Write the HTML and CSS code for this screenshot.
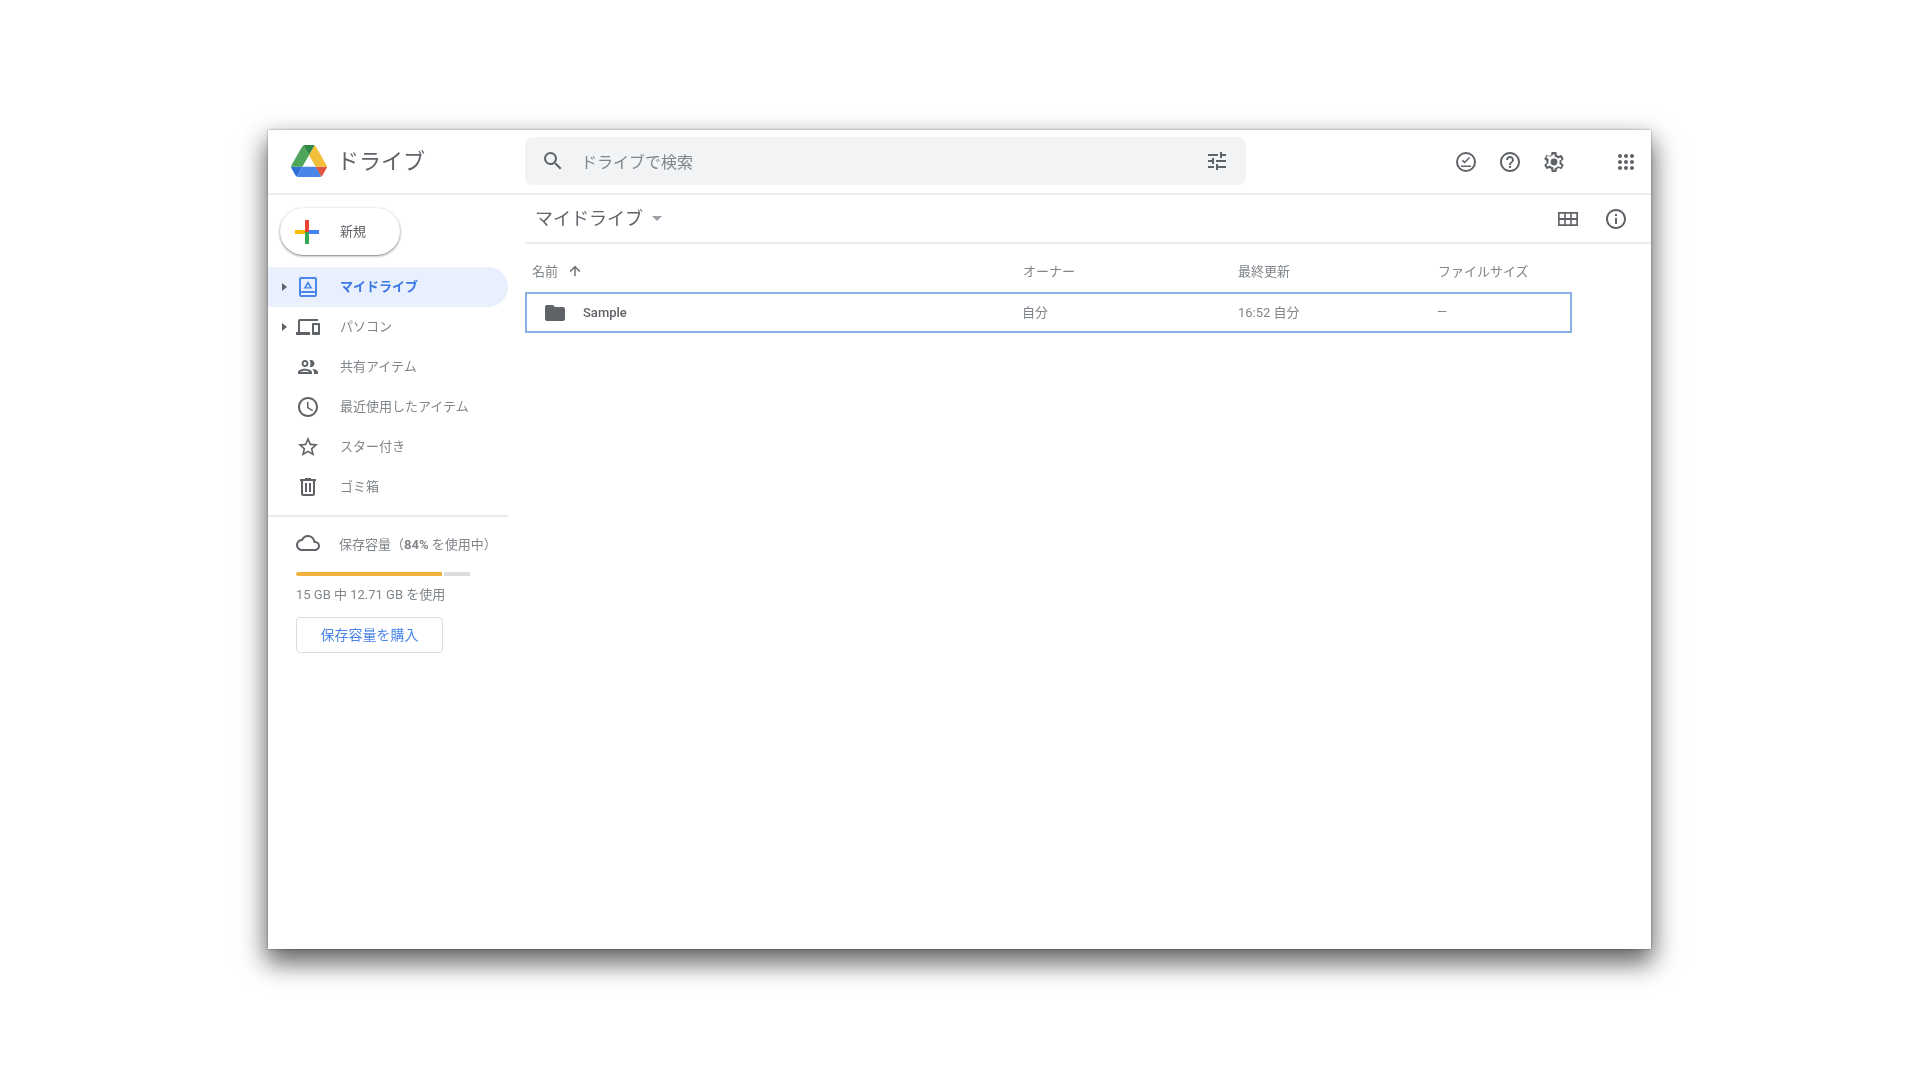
FILE: index.html
```html
<!DOCTYPE html>
<html lang="ja">
<head>
<meta charset="utf-8">
<title>ドライブ</title>
<link rel="stylesheet" href="styles.css">
</head>
<body>
<div class="window">
  <header class="topbar">
    <div class="brand">
      <svg class="logo" viewBox="0 0 87.3 78" width="36" height="32">
        <path d="M6.6 66.85l3.85 6.65c.8 1.4 1.95 2.5 3.3 3.3L27.5 53H0c0 1.55.4 3.1 1.2 4.5z" fill="#2f6fd6"/>
        <path d="M43.65 25L29.9 1.2c-1.35.8-2.5 1.9-3.3 3.3L1.2 48.5A9.06 9.06 0 0 0 0 53h27.5z" fill="#4fa65b"/>
        <path d="M73.55 76.8c1.35-.8 2.5-1.9 3.3-3.3l1.6-2.75 7.65-13.25c.8-1.4 1.2-2.95 1.2-4.5H59.8l5.85 11.5z" fill="#e2543e"/>
        <path d="M43.65 25L57.4 1.2C56.05.4 54.5 0 52.9 0H34.4c-1.6 0-3.15.45-4.5 1.2z" fill="#2f8a45"/>
        <path d="M59.8 53H27.5L13.75 76.8c1.35.8 2.9 1.2 4.5 1.2h50.8c1.6 0 3.15-.45 4.5-1.2z" fill="#4a86e8"/>
        <path d="M73.4 26.5L60.7 4.5c-.8-1.4-1.95-2.5-3.3-3.3L43.65 25 59.8 53h27.45c0-1.55-.4-3.1-1.2-4.5z" fill="#f4bf3a"/>
      </svg>
      <span class="brand-name">ドライブ</span>
    </div>
    <div class="search">
      <svg class="icon" viewBox="0 0 24 24"><path d="M15.5 14h-.79l-.28-.27A6.47 6.47 0 0 0 16 9.5 6.5 6.5 0 1 0 9.5 16c1.61 0 3.09-.59 4.23-1.57l.27.28v.79l5 4.99L20.49 19zm-6 0C7.01 14 5 11.99 5 9.5S7.01 5 9.5 5 14 7.01 14 9.500 11.990 14 9.500 14z"/></svg>
      <span class="search-text">ドライブで検索</span>
      <svg class="icon" viewBox="0 0 24 24"><path d="M3 17v2h6v-2H3zM3 5v2h10V5H3zm10 16v-2h8v-2h-8v-2h-2v6h2zM7 9v2H3v2h4v2h2V9H7zm14 4v-2H11v2h10zm-6-4h2V7h4V5h-4V3h-2v6z"/></svg>
    </div>
    <div class="top-actions">
      <svg class="icon" viewBox="0 0 24 24"><path fill-rule="evenodd" d="M12 2a10 10 0 1 0 0 20 10 10 0 0 0 0-20zm0 18a8 8 0 1 1 0-16 8 8 0 0 1 0 16z"/><path d="M7 15.500h10v1.600H7zM10.600 13.600l-2.700-2.700 1.100-1.100 1.600 1.600 4.400-4.400 1.100 1.100z"/></svg>
      <svg class="icon" viewBox="0 0 24 24"><path d="M11 18h2v-2h-2v2zm1-16C6.480 2 2 6.480 2 12s4.480 10 10 10 10-4.480 10-10S17.520 2 12 2zm0 18c-4.410 0-8-3.590-8-8s3.590-8 8-8 8 3.590 8 8-3.590 8-8 8zm0-14c-2.210 0-4 1.790-4 4h2c0-1.100.9-2 2-2s2 .9 2 2c0 2-3 1.750-3 5h2c0-2.250 3-2.500 3-5 0-2.210-1.790-4-4-4z"/></svg>
      <svg class="icon" viewBox="0 0 24 24"><path fill-rule="evenodd" d="M19.430 12.980c.04-.32.07-.64.07-.98s-.03-.66-.07-.98l2.110-1.650c.19-.15.24-.42.12-.64l-2-3.460c-.12-.22-.39-.3-.61-.22l-2.490 1c-.52-.4-1.080-.73-1.690-.98l-.38-2.650A.49.49 0 0 0 14 2h-4c-.25 0-.46.18-.49.42l-.38 2.650c-.61.25-1.170.59-1.690.98l-2.490-1c-.23-.09-.49 0-.61.22l-2 3.460c-.13.22-.07.49.12.64l2.110 1.650c-.04.32-.07.65-.07.98s.03.66.07.98l-2.110 1.650c-.19.15-.24.42-.12.64l2 3.460c.12.22.39.3.61.22l2.490-1c.52.4 1.080.73 1.690.98l.38 2.650c.03.24.24.42.49.42h4c.25 0 .46-.18.49-.42l.38-2.650c.61-.25 1.170-.59 1.690-.98l2.490 1c.23.09.49 0 .61-.22l2-3.460c.12-.22.07-.49-.12-.64l-2.110-1.650zM17.500 11.200c.04.3.06.5.06.8s-.02.5-.06.8l-.14 1.130 2.130 1.660-1 1.730-2.520-1.010-.9.69c-.4.3-.8.54-1.220.71l-1.070.43L12.390 20h-.78l-.39-2.680-1.070-.43c-.42-.17-.82-.41-1.220-.71l-.9-.69-2.520 1.010-1-1.730 2.130-1.660-.14-1.130c-.04-.3-.06-.5-.06-.8s.02-.5.06-.8l.14-1.130-2.130-1.660 1-1.730 2.520 1.010.9-.69c.4-.3.8-.54 1.220-.71l1.070-.43L11.610 4h.78l.39 2.680 1.070.43c.42.17.82.41 1.220.71l.9.69 2.520-1.010 1 1.730-2.130 1.660z"/><circle cx="12" cy="12" r="3.400"/></svg>
      <svg class="icon apps" viewBox="0 0 24 24"><path d="M6 8c1.100 0 2-.9 2-2s-.9-2-2-2-2 .9-2 2 .9 2 2 2zm6 12c1.100 0 2-.9 2-2s-.9-2-2-2-2 .9-2 2 .9 2 2 2zm-6 0c1.100 0 2-.9 2-2s-.9-2-2-2-2 .9-2 2 .9 2 2 2zm0-6c1.100 0 2-.9 2-2s-.9-2-2-2-2 .9-2 2 .9 2 2 2zm6 0c1.100 0 2-.9 2-2s-.9-2-2-2-2 .9-2 2 .9 2 2 2zm4-8c0 1.100.9 2 2 2s2-.9 2-2-.9-2-2-2-2 .9-2 2zm-4 2c1.100 0 2-.9 2-2s-.9-2-2-2-2 .9-2 2 .9 2 2 2zm6 6c1.100 0 2-.9 2-2s-.9-2-2-2-2 .9-2 2 .9 2 2 2zm0 6c1.100 0 2-.9 2-2s-.9-2-2-2-2 .9-2 2 .9 2 2 2z"/></svg>
    </div>
  </header>
  <div class="body">
    <aside class="sidebar">
      <button class="new-btn">
        <svg class="plus" viewBox="0 0 24 24" width="24" height="24">
          <rect x="0" y="10" width="12" height="4" fill="#fbbc04"/>
          <rect x="12" y="10" width="12" height="4" fill="#4285f4"/>
          <rect x="10" y="0" width="4" height="12" fill="#ea4335"/>
          <rect x="10" y="12" width="4" height="12" fill="#34a853"/>
        </svg>
        <span>新規</span>
      </button>
      <nav class="nav">
        <div class="nav-row active">
          <i class="caret"></i>
          <svg class="icon" viewBox="0 0 24 24"><path d="M19 2H5a2 2 0 0 0-2 2v16a2 2 0 0 0 2 2h14a2 2 0 0 0 2-2V4a2 2 0 0 0-2-2zm0 18H5v-2h14v2zm0-4H5V4h14v12z"/><path d="M12 6l-4.400 7.600h8.800L12 6zm0 3.200l1.700 3H10.300z"/></svg>
          <span>マイドライブ</span>
        </div>
        <div class="nav-row">
          <i class="caret"></i>
          <svg class="icon wide" viewBox="0 0 24 24"><path d="M4 6h18V4H4a2 2 0 0 0-2 2v11H0v3h14v-3H4V6zm19 2h-6a1 1 0 0 0-1 1v10a1 1 0 0 0 1 1h6a1 1 0 0 0 1-1V9a1 1 0 0 0-1-1zm-1 9h-4v-7h4v7z"/></svg>
          <span>パソコン</span>
        </div>
        <div class="nav-row">
          <i class="caret none"></i>
          <svg class="icon" viewBox="0 0 24 24"><path d="M9 13.750c-2.340 0-7 1.170-7 3.500V19h14v-1.750c0-2.330-4.660-3.500-7-3.500zM4.340 17c.84-.58 2.870-1.250 4.660-1.250s3.820.67 4.660 1.250H4.340zM9 12c1.930 0 3.500-1.570 3.500-3.500S10.930 5 9 5 5.500 6.570 5.500 8.500 7.070 12 9 12zm0-5c.83 0 1.500.67 1.500 1.500S9.830 10 9 10s-1.500-.67-1.500-1.500S8.170 7 9 7zm7.040 6.810c1.160.84 1.960 1.960 1.960 3.440V19h4v-1.750c0-2.020-3.500-3.170-5.960-3.440zM15 12c1.930 0 3.500-1.570 3.500-3.500S16.930 5 15 5c-.54 0-1.040.13-1.500.35.63.89 1 1.980 1 3.150s-.37 2.260-1 3.150c.46.22.96.35 1.500.35z"/></svg>
          <span>共有アイテム</span>
        </div>
        <div class="nav-row">
          <i class="caret none"></i>
          <svg class="icon" viewBox="0 0 24 24"><path d="M11.990 2C6.470 2 2 6.480 2 12s4.470 10 9.990 10C17.520 22 22 17.520 22 12S17.520 2 11.990 2zM12 20c-4.420 0-8-3.580-8-8s3.580-8 8-8 8 3.580 8 8-3.580 8-8 8zm.5-13H11v6l5.250 3.150.75-1.230-4.500-2.670z"/></svg>
          <span>最近使用したアイテム</span>
        </div>
        <div class="nav-row">
          <i class="caret none"></i>
          <svg class="icon" viewBox="0 0 24 24"><path d="M22 9.240l-7.190-.62L12 2 9.190 8.630 2 9.240l5.460 4.730L5.820 21 12 17.270 18.180 21l-1.630-7.030L22 9.240zM12 15.400l-3.760 2.270 1-4.280-3.320-2.880 4.380-.38L12 6.100l1.710 4.040 4.380.38-3.320 2.880 1 4.280L12 15.400z"/></svg>
          <span>スター付き</span>
        </div>
        <div class="nav-row">
          <i class="caret none"></i>
          <svg class="icon" viewBox="0 0 24 24"><path d="M15 4V3H9v1H4v2h1v13a2 2 0 0 0 2 2h10a2 2 0 0 0 2-2V6h1V4h-5zm2 15H7V6h10v13zM9 8h2v9H9V8zm4 0h2v9h-2V8z"/></svg>
          <span>ゴミ箱</span>
        </div>
      </nav>
      <div class="storage">
        <div class="storage-head">
          <svg class="icon" viewBox="0 0 24 24"><path d="M19.350 10.040A7.490 7.490 0 0 0 12 4C9.110 4 6.600 5.640 5.350 8.040A5.994 5.994 0 0 0 0 14c0 3.310 2.690 6 6 6h13c2.760 0 5-2.240 5-5 0-2.640-2.050-4.780-4.650-4.960zM19 18H6c-2.210 0-4-1.790-4-4 0-2.050 1.530-3.760 3.560-3.970l1.070-.11.500-.95A5.469 5.469 0 0 1 12 6c2.620 0 4.880 1.860 5.390 4.430l.3 1.500 1.530.11A2.980 2.980 0 0 1 22 15c0 1.650-1.350 3-3 3z"/></svg>
          <span>保存容量（<b>84%</b> を使用中）</span>
        </div>
        <div class="bar"><div class="bar-fill"></div><div class="bar-rest"></div></div>
        <div class="storage-text">15 GB 中 12.71 GB を使用</div>
        <button class="buy">保存容量を購入</button>
      </div>
    </aside>
    <main class="main">
      <div class="crumb">
        <span class="crumb-title">マイドライブ</span>
        <i class="crumb-caret"></i>
        <span class="spacer"></span>
        <svg class="icon" viewBox="0 0 24 24"><path fill-rule="evenodd" d="M2 5h20v14H2zM3.700 6.700v4.400h4.500V6.700zm6.100 0v4.400h4.400V6.700zm6 0v4.400h4.500V6.700zM3.700 12.900v4.400h4.500v-4.400zm6.100 0v4.400h4.400v-4.400zm6 0v4.400h4.500v-4.400z"/></svg>
        <svg class="icon info" viewBox="0 0 24 24"><path d="M11 7h2v2h-2zm0 4h2v6h-2zm1-9C6.480 2 2 6.480 2 12s4.480 10 10 10 10-4.480 10-10S17.520 2 12 2zm0 18c-4.410 0-8-3.590-8-8s3.590-8 8-8 8 3.590 8 8-3.590 8-8 8z"/></svg>
      </div>
      <div class="table">
        <div class="thead">
          <div class="c-name">名前
            <svg class="arrow" viewBox="0 0 24 24"><path d="M4 12l1.410 1.410L11 7.830V20h2V7.830l5.580 5.590L20 12l-8-8z"/></svg>
          </div>
          <div class="c-owner">オーナー</div>
          <div class="c-mod">最終更新</div>
          <div class="c-size">ファイルサイズ</div>
        </div>
        <div class="trow">
          <div class="c-name file">
            <svg class="folder" viewBox="0 0 24 24"><path d="M10 4H4a2 2 0 0 0-2 2v12a2 2 0 0 0 2 2h16a2 2 0 0 0 2-2V8a2 2 0 0 0-2-2h-8l-2-2z"/></svg>
            <span>Sample</span>
          </div>
          <div class="c-owner">自分</div>
          <div class="c-mod">16:52 自分</div>
          <div class="c-size">—</div>
        </div>
      </div>
    </main>
  </div>
</div>
</body>
</html>
```

FILE: styles.css
```css
* { box-sizing: border-box; }
html, body { margin: 0; height: 100%; background: #fff; }
body {
  padding: 130px 269px 131px 268px;
  font-family: Roboto, "Noto Sans CJK JP", sans-serif;
  color: #5f6368;
  overflow: hidden;
}
.window {
  height: 819px;
  background: #fff;
  display: flex;
  flex-direction: column;
  box-shadow: 0 12px 24px 2px rgba(0,0,0,.62), 0 0 2px rgba(0,0,0,.4);
  filter: blur(.45px);
}
.icon { width: 24px; height: 24px; fill: #5f6368; flex: none; }

.topbar {
  height: 65px;
  flex: none;
  display: flex;
  align-items: center;
  border-bottom: 2px solid #ececec;
  padding-bottom: 1px;
}
.brand { width: 257px; flex: none; display: flex; align-items: center; padding-left: 23px; }
.logo { flex: none; }
.brand-name { margin-left: 10px; font-size: 22px; color: #5f6368; padding-bottom: 4px; }
.search {
  width: 721px;
  height: 48px;
  flex: none;
  background: #f1f3f4;
  border-radius: 8px;
  display: flex;
  align-items: center;
  padding: 0 17px 0 16px;
}
.search-text { flex: 1; margin-left: 16px; font-size: 16px; color: #80868b; }
.top-actions { flex: 1; display: flex; align-items: center; padding: 1px 0 0 208px; gap: 20px; }
.apps { margin-left: 28px; }

.body { flex: 1; display: flex; min-height: 0; }
.sidebar { width: 240px; flex: none; padding-top: 13px; }
.new-btn {
  margin-left: 12px;
  width: 120px;
  height: 47px;
  border: 0;
  border-radius: 24px;
  background: #fff;
  box-shadow: 0 1px 3px rgba(60,64,67,.55), 0 1px 1px rgba(60,64,67,.2);
  display: flex;
  align-items: center;
  padding: 0 0 0 15px;
  font: 13px Roboto, "Noto Sans CJK JP", sans-serif;
  color: #5f6368;
}
.new-btn span { margin-left: 21px; padding-bottom: 2px; }
.nav { margin-top: 12px; border-bottom: 2px solid #ececec; padding-bottom: 8px; }
.nav-row {
  height: 40px;
  display: flex;
  align-items: center;
  font-size: 13px;
  color: #80868b;
  border-radius: 0 20px 20px 0;
  padding-left: 14px;
}
.nav-row .icon { margin-left: 9px; margin-right: 20px; }
.nav-row span { line-height: 20px; }
.nav-row.active { background: #e8f0fe; color: #3b78e7; font-weight: 700; }
.nav-row.active .icon { fill: #4a86e8; }
.caret {
  width: 0; height: 0;
  flex: none;
  border-left: 5px solid #5f6368;
  border-top: 4.500px solid transparent;
  border-bottom: 4.500px solid transparent;
}
.caret.none { visibility: hidden; }

.storage { padding: 14px 0 0 28px; }
.storage-head { display: flex; align-items: center; height: 24px; font-size: 13px; color: #80868b; }
.storage-head .icon { margin-right: 19px; }
.storage-head b { font-weight: 700; }
.bar { display: flex; gap: 2px; margin-top: 17px; }
.bar-fill { width: 146px; height: 4px; background: #f2b03f; border-radius: 2px 0 0 2px; }
.bar-rest { width: 26px; height: 4px; background: #dadce0; }
.storage-text { margin-top: 9px; font-size: 13px; color: #80868b; line-height: 20px; }
.buy {
  display: block;
  margin-top: 12px;
  width: 147px;
  height: 36px;
  background: #fff;
  border: 1px solid #dadce0;
  border-radius: 4px;
  color: #4a86e8;
  font: 14px Roboto, "Noto Sans CJK JP", sans-serif;
  padding: 0 0 2px;
}

.main { flex: 1; padding-left: 17px; min-width: 0; }
.crumb {
  height: 49px;
  display: flex;
  align-items: center;
  border-bottom: 2px solid #ececec;
  padding-left: 10px;
  padding-right: 23px;
}
.crumb-title { font-size: 18px; color: #5f6368; padding-bottom: 4px; }
.crumb-caret {
  margin-left: 9px;
  width: 0; height: 0;
  border-top: 5px solid #9aa0a6;
  border-left: 5px solid transparent;
  border-right: 5px solid transparent;
}
.spacer { flex: 1; }
.info { margin-left: 24px; }

.table { width: 1047px; padding-top: 13px; }
.thead, .trow { display: flex; align-items: center; font-size: 13px; color: #80868b; }
.thead { height: 27px; padding-left: 7px; margin-bottom: 8px; }
.trow {
  height: 41px;
  border: 2px solid #8ab0e6;
  padding-left: 3px;
}
.thead .c-name { width: 491px; display: flex; align-items: center; }
.thead .c-owner { width: 215px; }
.thead .c-mod { width: 200px; }
.arrow { width: 16px; height: 16px; fill: #5f6368; margin-left: 9px; }
.trow .c-name { width: 492px; display: flex; align-items: center; padding-left: 15px; color: #5f6368; font-weight: 500; }
.trow .c-owner { width: 216px; padding-bottom: 2px; }
.trow .c-mod { width: 199px; padding-bottom: 2px; }
.trow .c-size { padding-bottom: 2px; }
.folder { width: 24px; height: 24px; fill: #5f6368; margin-right: 16px; margin-left: -2px; }
```
